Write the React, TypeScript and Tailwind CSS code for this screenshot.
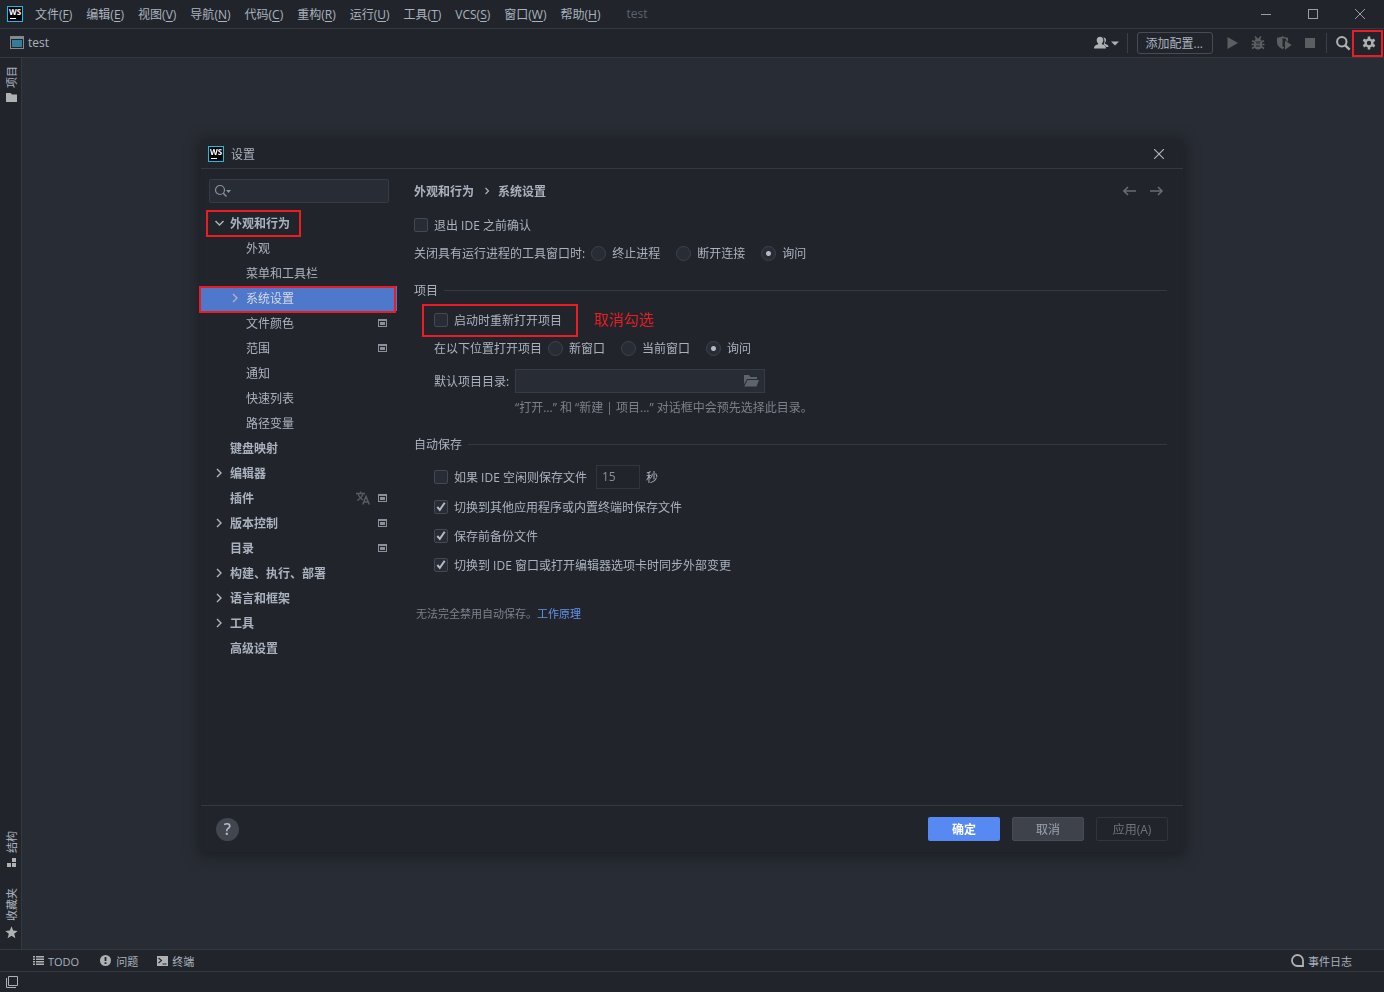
import type { ReactNode } from 'react';

function Logo() {
  return (
    <svg width="16" height="16" viewBox="0 0 16 16" className="shrink-0" aria-hidden="true">
      <rect width="16" height="16" fill="#07c3f2" />
      <rect x="1" y="1" width="14" height="14" fill="#000" />
      <text x="8" y="8.6" textAnchor="middle" fontSize="8" fontWeight="700" fill="#fff" fontFamily="Open Sans, sans-serif">WS</text>
      <rect x="3" y="12" width="6" height="1" fill="#fff" />
    </svg>
  );
}

function Chevron({ open = false }: { open?: boolean }) {
  return (
    <svg width="12" height="13" viewBox="0 0 12 13" fill="none" stroke="#afb4bd" strokeWidth="1.4" aria-hidden="true">
      {open ? <path d="M2.500 4l4 4 4-4" /> : <path d="M4 2l4 4-4 4" />}
    </svg>
  );
}

function ProjectLevel() {
  return (
    <svg width="9" height="9" viewBox="0 0 9 9" className="shrink-0" aria-hidden="true">
      <path d="M0 0h9v8H0zM1 2v5h7V2z" fill="#8a919b" fillRule="evenodd" />
      <rect x="2" y="3" width="5" height="3" fill="#8a919b" />
    </svg>
  );
}

function Translate() {
  return (
    <svg width="14" height="15" viewBox="0 0 14 15" fill="none" stroke="#575c64" strokeWidth="1.3" aria-hidden="true">
      <path d="M0 2.5h9M4.5 .5v2M2 3c1 3 3 5 5 6M7 3c-1 3-3 5-6 6.5" />
      <path d="M6.8 13.5L10 5.5l3.3 8M8 11h4.2" strokeWidth="1.5" />
    </svg>
  );
}

function Highlight({ className }: { className: string }) {
  return <span aria-hidden="true" className={'pointer-events-none absolute border-2 border-[#ed1c24] ' + className} />;
}

const menus: [string, string][] = [
  ['文件', 'F'], ['编辑', 'E'], ['视图', 'V'], ['导航', 'N'], ['代码', 'C'], ['重构', 'R'],
  ['运行', 'U'], ['工具', 'T'], ['VCS', 'S'], ['窗口', 'W'], ['帮助', 'H'],
];

function TitleBar() {
  return (
    <header className="flex h-[29px] shrink-0 items-center border-b border-[#333841] pr-[19px] pl-[7px]">
      <Logo />
      <nav className="ml-3 flex gap-[14px] pt-[2px]">
        {menus.map(([label, key]) => (
          <button key={label} type="button" className="whitespace-nowrap">
            {label}(<span className="underline underline-offset-2">{key}</span>)
          </button>
        ))}
      </nav>
      <span className="ml-[26px] text-[#5c626d]">test</span>
      <div className="ml-auto flex items-center gap-[37px]">
        <button type="button" aria-label="最小化">
          <svg width="10" height="10" viewBox="0 0 10 10"><path d="M0 5.5h10" stroke="#9a9ea6" /></svg>
        </button>
        <button type="button" aria-label="最大化">
          <svg width="10" height="10" viewBox="0 0 10 10"><rect x=".5" y=".5" width="9" height="9" fill="none" stroke="#9a9ea6" /></svg>
        </button>
        <button type="button" aria-label="关闭">
          <svg width="10" height="10" viewBox="0 0 10 10"><path d="M0 0l10 10M10 0L0 10" stroke="#9a9ea6" /></svg>
        </button>
      </div>
    </header>
  );
}

function Toolbar() {
  return (
    <div className="flex h-[29px] shrink-0 items-center border-b border-[#333841] pl-[10px]">
      <svg width="14" height="15" viewBox="0 0 14 15" aria-hidden="true">
        <path d="M0 0h14v13H0zM1 3v9h12V3z" fill="#7f8b91" fillRule="evenodd" />
        <rect x="2" y="4" width="10" height="7" fill="#337d9b" />
      </svg>
      <span className="ml-1">test</span>
      <div className="ml-auto flex h-full items-center">
        <button type="button" aria-label="用户" className="flex items-center gap-[2px]">
          <svg width="15" height="14" viewBox="0 0 15 14" fill="#afb1b3">
            <path d="M9.200 1.500c2 0 2.800 1 2.800 2.500 0 1.300-.5 2.200-1.100 2.800v1c1.500.7 3.600 1 3.600 3.200H12c-.6-1.300-1.500-1.900-2.600-2.400.7-.9 1.100-2.200 1.100-3.600 0-1.400-.5-2.600-1.300-3.500z" />
            <path d="M6 .8c2 0 3.300 1.300 3.300 3.200 0 1.400-.6 2.600-1.400 3.300v1c1.700.7 4.100 1.200 4.100 4.200H0c0-3 2.400-3.500 4.100-4.200v-1C3.300 6.600 2.700 5.400 2.700 4 2.700 2.100 4 .8 6 .8z" />
          </svg>
          <svg width="8" height="5" viewBox="0 0 8 5"><path d="M0 .5h8L4 4.500z" fill="#afb1b3" /></svg>
        </button>
        <span className="ml-2 h-5 w-px bg-[#3a3f48]" />
        <button type="button" className="ml-[9px] h-[22px] rounded-[3px] border border-[#464c57] pt-[2px] pr-[9px] pl-2 leading-[18px] whitespace-nowrap">添加配置...</button>
        <button type="button" aria-label="运行" className="ml-3">
          <svg width="14" height="14" viewBox="0 0 14 14"><path d="M2.500 1L13 7 2.500 13z" fill="#5c5e61" /></svg>
        </button>
        <button type="button" aria-label="调试" className="ml-3">
          <svg width="14" height="14" viewBox="0 0 14 14">
            <g stroke="#5c5e61" strokeWidth="1.600" fill="none">
              <path d="M4 .5l2 2.500M10 .5L8 3M1 4.800l3 1.200M13 4.800l-3 1.200M.5 8.500h13M1 12.500l3-2M13 12.500l-3-2" />
            </g>
            <path d="M3.500 5C4 3 5.300 2.200 7 2.200S10 3 10.500 5zM3 5.500h8V9c0 3-1.800 4.500-4 4.500S3 12 3 9z" fill="#5c5e61" />
            <path d="M5 7h4M5 10h4" stroke="#21252b" />
          </svg>
        </button>
        <button type="button" aria-label="覆盖率" className="ml-3">
          <svg width="15" height="14" viewBox="0 0 15 14">
            <path d="M0 1.800C2 1.600 4 1.200 5.500.3 7 1.200 9 1.600 11 1.800V5.500L9 4.300V3c-1.300-.1-2.400-.4-3.500-.9V11l1.500-.5v1.800l-1.500.8C2 11.500 0 9.500 0 6z" fill="#5c5e61" />
            <path d="M8 4.500l6.700 4.500L8 13.800z" fill="#5c5e61" />
          </svg>
        </button>
        <button type="button" aria-label="停止" className="ml-[13px]">
          <svg width="10" height="10" viewBox="0 0 10 10"><rect width="10" height="10" fill="#5c5e61" /></svg>
        </button>
        <span className="ml-[11px] h-5 w-px bg-[#3a3f48]" />
        <button type="button" aria-label="搜索" className="ml-[9px]">
          <svg width="15" height="15" viewBox="0 0 15 15" fill="none" stroke="#afb1b3" strokeWidth="2">
            <circle cx="5.800" cy="5.800" r="4.700" /><path d="M9.300 9.300l4.300 4.300" strokeWidth="2.400" />
          </svg>
        </button>
        <button type="button" aria-label="设置" className="relative ml-px flex h-full w-8 items-center justify-center pl-[2px]">
          <svg width="14" height="14" viewBox="0 0 14 14" fill="none" stroke="#afb1b3">
            <circle cx="7" cy="7" r="3.400" strokeWidth="2.400" />
            <path d="M7 .5v2.500M7 11v2.500M1.370 3.750l2.170 1.250M10.460 9l2.170 1.250M1.370 10.250L3.540 9M10.460 5l2.170-1.250" strokeWidth="2.600" />
          </svg>
          <Highlight className="top-px right-px bottom-0 left-0" />
        </button>
      </div>
    </div>
  );
}

function StripButton({ label, children, className = '' }: { label: string; children: ReactNode; className?: string }) {
  return (
    <button type="button" className={'flex w-full flex-col items-center gap-[5px] pl-[2px] text-[11px] leading-4 ' + className}>
      <span className="rotate-180 [text-orientation:sideways] [writing-mode:vertical-rl]">{label}</span>
      {children}
    </button>
  );
}

function SideStrip() {
  return (
    <aside className="flex w-[22px] shrink-0 flex-col border-r border-[#333841] pt-2 pb-[10px]">
      <StripButton label="项目">
        <svg width="11" height="9" viewBox="0 0 11 9"><path d="M0 0h4.500L6 1.500h5V9H0z" fill="#afb1b3" /></svg>
      </StripButton>
      <StripButton label="结构" className="mt-auto">
        <svg width="9" height="9" viewBox="0 0 9 9" fill="#afb1b3"><path d="M5 0h4v4H5zM0 5h4v4H0zM5 5h4v4H5z" /></svg>
      </StripButton>
      <StripButton label="收藏夹" className="mt-[21px]">
        <svg width="13" height="13" viewBox="0 0 13 13"><path d="M6.500.3l1.700 4.300 4.500.3-3.500 2.900 1.200 4.500-3.900-2.500-3.900 2.500 1.200-4.500L.3 4.900l4.500-.3z" fill="#afb1b3" /></svg>
      </StripButton>
    </aside>
  );
}

function Check({ label, checked = false }: { label: string; checked?: boolean }) {
  return (
    <label className="flex items-center gap-[6px]">
      <span className="relative flex">
        <input type="checkbox" defaultChecked={checked} className="peer size-[14px] appearance-none rounded-[2px] border border-[#434853] bg-[#282c34]" />
        <svg width="14" height="14" viewBox="0 0 14 14" className="pointer-events-none absolute inset-0 hidden peer-checked:block">
          <path d="M3.300 7l2.500 2.800 4.900-7" fill="none" stroke="#b4bac5" strokeWidth="2" />
        </svg>
      </span>
      <span className="pt-[2px]">{label}</span>
    </label>
  );
}

function Radio({ name, label, checked = false }: { name: string; label: string; checked?: boolean }) {
  return (
    <label className="mr-4 flex items-center gap-[6px]">
      <input type="radio" name={name} defaultChecked={checked} className="size-[15px] appearance-none rounded-full border border-[#3d424d] bg-[#282c34] checked:bg-[radial-gradient(circle,#b4bac5_2px,transparent_3px)]" />
      <span className="pt-[2px]">{label}</span>
    </label>
  );
}

function Section({ title }: { title: string }) {
  return (
    <h2 className="mt-[13px] flex h-6 items-center gap-[6px]">
      <span className="pt-[2px]">{title}</span>
      <span className="h-px flex-1 bg-[#333841]" />
    </h2>
  );
}

type Node = { label: string; child?: boolean; arrow?: 'open' | 'closed'; project?: boolean; translate?: boolean; selected?: boolean; boxed?: boolean };

const tree: Node[] = [
  { label: '外观和行为', arrow: 'open', boxed: true },
  { label: '外观', child: true },
  { label: '菜单和工具栏', child: true },
  { label: '系统设置', child: true, arrow: 'closed', selected: true },
  { label: '文件颜色', child: true, project: true },
  { label: '范围', child: true, project: true },
  { label: '通知', child: true },
  { label: '快速列表', child: true },
  { label: '路径变量', child: true },
  { label: '键盘映射' },
  { label: '编辑器', arrow: 'closed' },
  { label: '插件', project: true, translate: true },
  { label: '版本控制', arrow: 'closed', project: true },
  { label: '目录', project: true },
  { label: '构建、执行、部署', arrow: 'closed' },
  { label: '语言和框架', arrow: 'closed' },
  { label: '工具', arrow: 'closed' },
  { label: '高级设置' },
];

function TreeRow({ node }: { node: Node }) {
  return (
    <button
      type="button"
      className={
        'relative flex h-[25px] w-full items-center pr-[10px] ' +
        (node.child ? 'pl-7 ' : 'pl-3 font-semibold ') +
        (node.selected ? 'bg-[#4d78cc] text-[#d7dae0]' : '')
      }
    >
      <span className="flex w-[17px] shrink-0">{node.arrow && <Chevron open={node.arrow === 'open'} />}</span>
      {node.label}
      <span className="ml-auto flex items-center gap-2">
        {node.translate && <Translate />}
        {node.project && <ProjectLevel />}
      </span>
      {node.boxed && <Highlight className="-top-px -bottom-px left-[5px] w-[95px]" />}
      {node.selected && <Highlight className="top-0 right-px -bottom-[2px] -left-[2px]" />}
    </button>
  );
}

function Sidebar() {
  return (
    <aside className="w-[196px] shrink-0 pt-[10px]">
      <div className="mx-2 flex h-6 items-center rounded-[2px] border border-[#363b45] bg-[#282c34] pl-1">
        <svg width="18" height="14" viewBox="0 0 18 14" fill="none" stroke="#8a919b" className="shrink-0" aria-hidden="true">
          <circle cx="6" cy="6" r="4.500" strokeWidth="1.200" />
          <path d="M9.300 9.300l3.200 3.200" strokeWidth="1.400" />
          <path d="M12 6h5l-2.500 3z" fill="#8a919b" stroke="none" />
        </svg>
        <input type="search" aria-label="搜索设置" className="w-full min-w-0 bg-transparent outline-none" />
      </div>
      <nav className="mt-2">{tree.map((n) => <TreeRow key={n.label} node={n} />)}</nav>
    </aside>
  );
}

function SettingsPage() {
  return (
    <main className="min-w-0 flex-1 pt-[10px] pr-4 pl-[17px] whitespace-nowrap">
      <div className="flex h-6 items-center font-semibold">
        <span className="pt-[2px]">外观和行为</span>
        <svg width="6" height="8" viewBox="0 0 6 8" fill="none" stroke="currentColor" strokeWidth="1.200" className="mr-2 ml-[10px]" aria-hidden="true"><path d="M1.500 1l3 3-3 3" /></svg>
        <span className="pt-[2px]">系统设置</span>
        <div className="mr-[3px] ml-auto flex gap-[13px] text-[#686b70]">
          <button type="button" aria-label="后退">
            <svg width="14" height="10" viewBox="0 0 14 10" fill="none" stroke="currentColor" strokeWidth="1.600"><path d="M13 5H1M5 1L1 5l4 4" /></svg>
          </button>
          <button type="button" aria-label="前进">
            <svg width="14" height="10" viewBox="0 0 14 10" fill="none" stroke="currentColor" strokeWidth="1.600"><path d="M0 5h12M8 1l4 4-4 4" /></svg>
          </button>
        </div>
      </div>
      <div className="mt-[10px] flex h-6 items-center"><Check label="退出 IDE 之前确认" /></div>
      <div className="mt-1 flex h-6 items-center" role="radiogroup" aria-labelledby="close-label">
        <span id="close-label" className="mr-[6px] pt-[2px]">关闭具有运行进程的工具窗口时:</span>
        <Radio name="close" label="终止进程" />
        <Radio name="close" label="断开连接" />
        <Radio name="close" label="询问" checked />
      </div>

      <Section title="项目" />
      <div className="pl-5">
        <div className="mt-[6px] flex h-6 items-center">
          <div className="relative flex h-6 items-center">
            <Check label="启动时重新打开项目" />
            <Highlight className="-top-1 -right-4 -bottom-[5px] -left-3" />
          </div>
          <span className="ml-8 pb-[2px] text-[15px] text-[#ed1c24]">取消勾选</span>
        </div>
        <div className="mt-1 flex h-6 items-center" role="radiogroup" aria-labelledby="open-label">
          <span id="open-label" className="mr-[6px] pt-[2px]">在以下位置打开项目</span>
          <Radio name="open" label="新窗口" />
          <Radio name="open" label="当前窗口" />
          <Radio name="open" label="询问" checked />
        </div>
        <div className="mt-[9px] flex h-6 items-center gap-[6px]">
          <label htmlFor="dir" className="pt-[2px]">默认项目目录:</label>
          <div className="flex h-6 w-[250px] items-center border border-[#363b45] bg-[#282c34] pr-[5px]">
            <input id="dir" type="text" className="min-w-0 flex-1 bg-transparent px-1 outline-none" />
            <button type="button" aria-label="浏览">
              <svg width="15" height="12" viewBox="0 0 15 12" fill="#5d646b"><path d="M0 0h5l1.500 2H13v2H3L0 9.500zM3.500 5H15l-2.500 6.500H.3z" /></svg>
            </button>
          </div>
        </div>
        <p className="mt-[2px] flex h-6 items-center pt-[2px] pl-[81px] text-[#7b818d]">“打开...” 和 “新建 | 项目...” 对话框中会预先选择此目录。</p>
      </div>

      <Section title="自动保存" />
      <div className="pl-5">
        <div className="mt-[9px] flex h-6 items-center">
          <Check label="如果 IDE 空闲则保存文件" />
          <input type="text" aria-label="空闲秒数" defaultValue="15" className="mr-[6px] ml-[9px] h-6 w-11 border border-[#30353e] bg-transparent px-[5px] pb-[2px] text-[#8a909b] outline-none" />
          <span className="pt-[2px]">秒</span>
        </div>
        <div className="mt-[6px] flex h-6 items-center"><Check label="切换到其他应用程序或内置终端时保存文件" checked /></div>
        <div className="mt-[5px] flex h-6 items-center"><Check label="保存前备份文件" checked /></div>
        <div className="mt-[5px] flex h-6 items-center"><Check label="切换到 IDE 窗口或打开编辑器选项卡时同步外部变更" checked /></div>
      </div>
      <p className="mt-6 flex h-6 items-center pt-[2px] pl-[2px] text-[11px] text-[#7b818d]">
        无法完全禁用自动保存。<a href="#how" className="text-[#6494ed]">工作原理</a>
      </p>
    </main>
  );
}

function SettingsDialog() {
  return (
    <div className="fixed inset-0 flex items-center justify-center">
      <section role="dialog" aria-label="设置" className="flex h-[712px] w-[982px] max-w-full flex-col bg-[#21252b] shadow-[0_2px_14px_2px_rgba(0,0,0,0.35)]">
        <header className="flex h-[29px] shrink-0 items-center border-b border-[#333841] pr-[19px] pl-[7px]">
          <Logo />
          <h1 className="ml-[7px] pt-[2px]">设置</h1>
          <button type="button" aria-label="关闭" className="ml-auto">
            <svg width="10" height="10" viewBox="0 0 10 10"><path d="M0 0l10 10M10 0L0 10" stroke="#b5b8bd" strokeWidth="1.100" /></svg>
          </button>
        </header>
        <div className="flex min-h-0 flex-1">
          <Sidebar />
          <SettingsPage />
        </div>
        <footer className="flex h-[47px] shrink-0 items-center gap-3 border-t border-[#333841] px-[15px]">
          <button type="button" aria-label="帮助" className="mr-auto size-[23px] rounded-full bg-[#41464f] text-[16px] leading-[23px] font-semibold text-[#b4bac5]">?</button>
          <button type="button" className="h-6 w-[72px] rounded-[2px] bg-[#568af2] pt-[2px] font-semibold text-white">确定</button>
          <button type="button" className="h-6 w-[72px] rounded-[2px] border border-[#464b54] bg-[#3d424b] pt-[2px] text-[#9da5b4]">取消</button>
          <button type="button" className="h-6 w-[72px] rounded-[2px] border border-[#30353d] pt-[2px] text-[#70757c]">应用(A)</button>
        </footer>
      </section>
    </div>
  );
}

function BottomBars() {
  return (
    <footer className="shrink-0">
      <div className="flex h-[22px] items-center border-t border-[#333841] pr-8 pl-[33px] text-[11px]">
        <button type="button" className="flex items-center gap-1">
          <svg width="11" height="9" viewBox="0 0 11 9" fill="#afb1b3"><path d="M0 0h2v1.500H0zM3 0h8v1.500H3zM0 2.500h2V4H0zM3 2.500h8V4H3zM0 5h2v1.500H0zM3 5h8v1.500H3zM0 7.500h2V9H0zM3 7.500h8V9H3z" /></svg>
          <span className="pt-[2px]">TODO</span>
        </button>
        <button type="button" className="ml-[21px] flex items-center gap-[5px]">
          <svg width="11" height="11" viewBox="0 0 11 11"><circle cx="5.500" cy="5.500" r="5.500" fill="#afb1b3" /><path d="M5.500 2v4M5.500 7.300v1.700" stroke="#21252b" strokeWidth="1.800" /></svg>
          <span className="pt-[2px]">问题</span>
        </button>
        <button type="button" className="ml-[19px] flex items-center gap-1">
          <svg width="11" height="10" viewBox="0 0 11 10"><rect width="11" height="10" fill="#afb1b3" /><path d="M1.500 2l3 2.500-3 2.500M5.500 8h4" stroke="#21252b" strokeWidth="1.100" fill="none" /></svg>
          <span className="pt-[2px]">终端</span>
        </button>
        <button type="button" className="ml-auto flex items-center gap-1">
          <svg width="13" height="13" viewBox="0 0 13 13"><path d="M6.500 1A5.500 5.500 0 1 0 6.500 12H12V6.500A5.500 5.500 0 0 0 6.500 1z" fill="none" stroke="#afb1b3" strokeWidth="1.800" /></svg>
          <span className="pt-[2px]">事件日志</span>
        </button>
      </div>
      <div className="flex h-[21px] items-center border-t border-[#333841] pl-[6px]">
        <button type="button" aria-label="工具窗口">
          <svg width="12" height="12" viewBox="0 0 12 12" fill="none" stroke="#afb1b3"><path d="M2.500.5h9v9h-9zM.5 2v9.500H10" /></svg>
        </button>
      </div>
    </footer>
  );
}

export default function App() {
  return (
    <div className="flex h-screen flex-col bg-[#21252b] font-['Open_Sans','Noto_Sans_CJK_SC',sans-serif] text-[12px] leading-4 text-[#abb2bf]">
      <TitleBar />
      <Toolbar />
      <div className="flex min-h-0 flex-1">
        <SideStrip />
        <div className="flex-1 bg-[#282c34]" />
      </div>
      <BottomBars />
      <SettingsDialog />
    </div>
  );
}
